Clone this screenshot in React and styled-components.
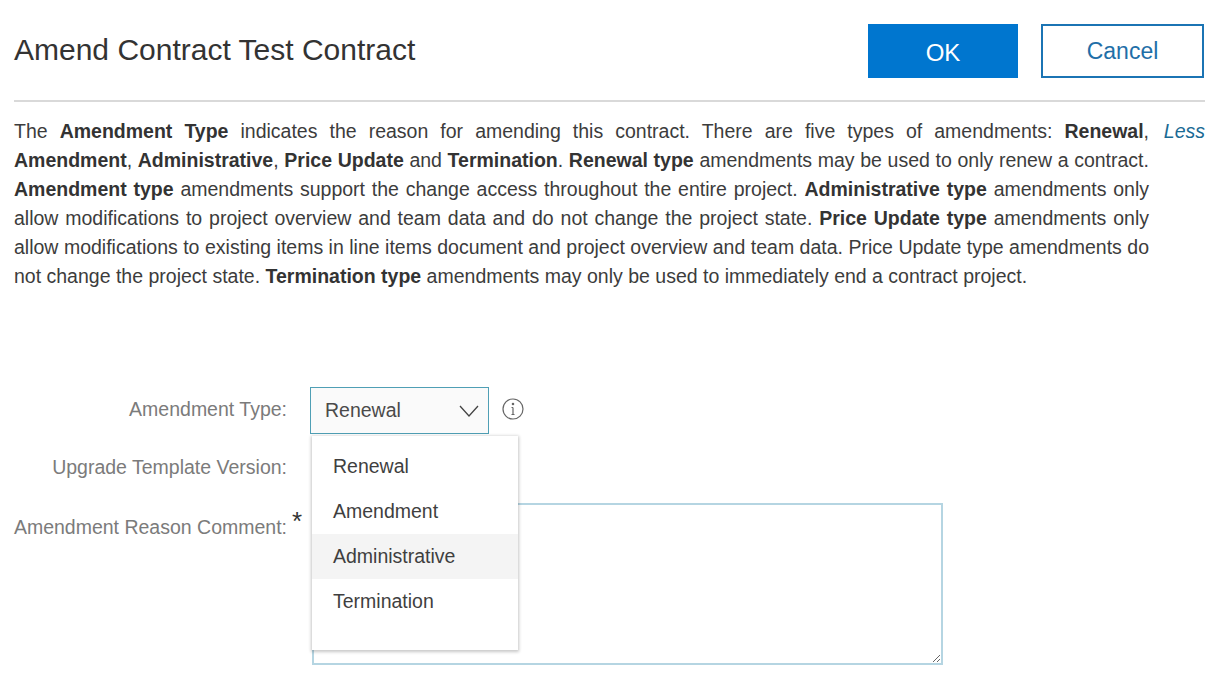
import React from 'react'
import styled, { createGlobalStyle } from 'styled-components'

const GlobalStyle = createGlobalStyle`
  html, body { margin: 0; padding: 0; background: #fff; }
  body { font-family: "Liberation Sans", Arial, sans-serif; color: #333; overflow: hidden; }
`

const Page = styled.div`
  width: 1229px;
  height: 687px;
  padding: 0 24px 0 14px;
  box-sizing: border-box;
`

const Header = styled.header`
  height: 102px;
  box-sizing: border-box;
  border-bottom: 2px solid #d9d9d9;
  display: flex;
  justify-content: space-between;
  align-items: flex-start;
`

const Title = styled.h1`
  margin: 31px 0 0;
  font-size: 30px;
  line-height: 38px;
  font-weight: 400;
  color: #333;
`

const Actions = styled.div`
  display: flex;
  gap: 23px;
  margin-top: 24px;
  margin-right: 1px;
`

const Button = styled.button`
  width: ${(props) => (props.primary ? '150px' : '163px')};
  height: 54px;
  box-sizing: border-box;
  font-family: inherit;
  font-size: ${(props) => (props.primary ? '24px' : '23px')};
  background: ${(props) => (props.primary ? '#0076cf' : '#fff')};
  color: ${(props) => (props.primary ? '#fff' : '#1f6fa8')};
  border: ${(props) => (props.primary ? 'none' : '2px solid #1b74b4')};
  padding: ${(props) => (props.primary ? '4px 0 0' : '0')};
`

const Intro = styled.div`
  display: flex;
  justify-content: space-between;
  align-items: flex-start;
  margin-top: 15px;
  font-size: 19.5px;
  line-height: 29px;
`

const Copy = styled.p`
  margin: 0;
  width: 1135px;
  text-align: justify;
  color: #3c3c3c;
  b { color: #333; }
`

const Less = styled.a`
  font-style: italic;
  color: #1a6a94;
`

const Form = styled.div`
  position: relative;
  margin-top: 96px;
  display: grid;
  grid-template-columns: 273px 632px;
  column-gap: 24px;
  grid-template-rows: 47px 69px 162px;
`

const Label = styled.div`
  justify-self: end;
  white-space: nowrap;
  font-size: 19.5px;
  line-height: 24px;
  color: #7b7b7b;
  padding-top: ${(props) => props.top || '10px'};
  position: relative;
`

const Star = styled.span`
  position: absolute;
  right: -15px;
  top: 5px;
  font-size: 26px;
  line-height: 26px;
  color: #333;
`

const SelectRow = styled.div`
  display: flex;
  align-items: center;
  gap: 13px;
  margin-left: -1px;
`

const SelectBox = styled.div`
  width: 179px;
  height: 47px;
  box-sizing: border-box;
  border: 1px solid #4f9fb5;
  background: #fafafa;
  display: flex;
  align-items: center;
  justify-content: space-between;
  padding: 0 9px 0 14px;
  font-size: 19.5px;
  color: #4a4a4a;
`

const Comment = styled.textarea`
  width: 631px;
  height: 162px;
  box-sizing: border-box;
  border: 2px solid #b5d5e2;
  background: #fff;
  outline: none;
  margin: 0 0 0 1px;
  resize: both;
  display: block;
`

const Menu = styled.ul`
  position: absolute;
  left: 298px;
  top: 49px;
  width: 206px;
  height: 214px;
  margin: 0;
  padding: 8px 0 0;
  box-sizing: border-box;
  list-style: none;
  background: #fff;
  box-shadow: 0 1px 3px 1px rgba(0, 0, 0, 0.22);
`

const MenuItem = styled.li`
  height: 45px;
  padding-left: 21px;
  font-size: 19.5px;
  line-height: 45px;
  color: #3f3f3f;
  background: ${(props) => (props.active ? '#f4f4f4' : 'transparent')};
`

const InfoGlyph = styled.svg`
  margin-bottom: 3px;
`

const Chevron = () => (
  <svg width="20" height="12" viewBox="0 0 20 12" fill="none" stroke="#444" strokeWidth="1.3">
    <path d="M1 1l9 10 9-10" />
  </svg>
)

const InfoIcon = () => (
  <InfoGlyph width="22" height="22" viewBox="0 0 22 22" fill="none" stroke="#666" strokeWidth="1.2">
    <circle cx="11" cy="11" r="10" />
    <path d="M11 9.5v7M9.5 16.5h3M9.5 9.5H11" />
    <circle cx="11" cy="6" r="0.7" fill="#666" />
  </InfoGlyph>
)

const options = ['Renewal', 'Amendment', 'Administrative', 'Termination']

const App = () => {
  return (
    <Page>
      <GlobalStyle />
      <Header>
        <Title>Amend Contract Test Contract</Title>
        <Actions>
          <Button primary>OK</Button>
          <Button>Cancel</Button>
        </Actions>
      </Header>
      <Intro>
        <Copy>
          The <b>Amendment Type</b> indicates the reason for amending this contract. There are five types of amendments: <b>Renewal</b>, <b>Amendment</b>, <b>Administrative</b>, <b>Price Update</b> and <b>Termination</b>. <b>Renewal type</b> amendments may be used to only renew a contract. <b>Amendment type</b> amendments support the change access throughout the entire project. <b>Administrative type</b> amendments only allow modifications to project overview and team data and do not change the project state. <b>Price Update type</b> amendments only allow modifications to existing items in line items document and project overview and team data. Price Update type amendments do not change the project state. <b>Termination type</b> amendments may only be used to immediately end a contract project.
        </Copy>
        <Less>Less</Less>
      </Intro>
      <Form>
        <Label>Amendment Type:</Label>
        <SelectRow>
          <SelectBox>
            Renewal
            <Chevron />
          </SelectBox>
          <InfoIcon />
        </SelectRow>
        <Label top="21px">Upgrade Template Version:</Label>
        <div />
        <Label top="12px">
          Amendment Reason Comment:
          <Star>*</Star>
        </Label>
        <Comment />
        <Menu>
          {options.map((option) => (
            <MenuItem key={option} active={option === 'Administrative'}>{option}</MenuItem>
          ))}
        </Menu>
      </Form>
    </Page>
  )
}

export default App
